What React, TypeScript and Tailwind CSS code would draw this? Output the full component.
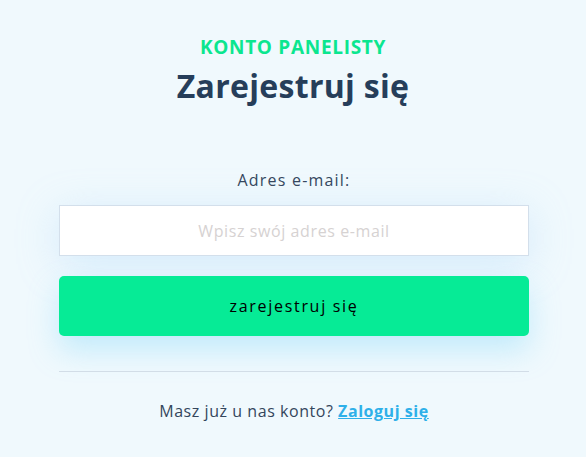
import React from "react";

export default function App() {
  return (
    <div
      className="w-full h-[457px] bg-[#f0f9fd] flex flex-col items-center overflow-hidden"
      style={{ fontFamily: '"Open Sans", "Noto Sans", sans-serif' }}
    >
      <div className="mt-[35px] text-[19px] leading-[24px] font-bold text-[#0be68f] tracking-[0.7px]">
        KONTO PANELISTY
      </div>
      <h1 className="mt-[7px] text-[32px] leading-[40px] font-bold text-[#263e5a] tracking-[0.3px]">
        Zarejestruj się
      </h1>
      <div className="w-[470px] ml-[2px] mt-[64px] flex flex-col items-center">
        <label className="text-[16px] leading-[20px] text-[#34465c] tracking-[1.2px]">
          Adres e-mail:
        </label>
        <input
          type="email"
          placeholder="Wpisz swój adres e-mail"
          className="mt-[15px] w-full h-[51px] bg-white border border-[#d3dfeb] text-center text-[16px] tracking-[0.6px] placeholder:text-[#d6d2d2] outline-none shadow-[0_8px_40px_rgba(160,210,250,0.35)]"
        />
        <button className="mt-[20px] w-full h-[60px] rounded-[5px] bg-[#06eb96] text-[16px] text-black tracking-[1.7px] shadow-[0_14px_30px_rgba(110,210,250,0.35)]">
          zarejestruj się
        </button>
        <div className="mt-[35px] w-full h-px bg-[#d2dde7]" />
        <p className="mt-[28px] text-[16px] leading-[22px] text-[#34465c] tracking-[0.55px]">
          Masz już u nas konto?{" "}
          <a href="#" className="font-bold text-[#2eb0e9] underline">
            Zaloguj się
          </a>
        </p>
      </div>
    </div>
  );
}
